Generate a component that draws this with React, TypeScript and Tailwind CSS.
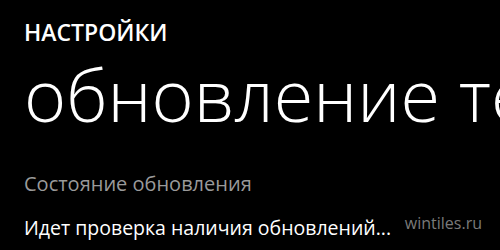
export default function App() {
  return (
    <div
      className="w-[500px] h-[250px] bg-black text-white overflow-hidden relative"
      style={{ fontFamily: '"Open Sans", "Noto Sans", sans-serif' }}
    >
      <div className="pl-6 pt-[17px]">
        <h2 className="text-[23px] leading-[30px] font-semibold">НАСТРОЙКИ</h2>
        <h1 className="mt-[7px] text-[72px] leading-[80px] font-light whitespace-nowrap overflow-hidden">
          обновление телефона
        </h1>
        <p className="mt-[37px] text-[20px] leading-[26px] text-[#9a9a9a]">Состояние обновления</p>
        <p className="mt-[18px] text-[19.5px] leading-[26px] text-white whitespace-nowrap">
          Идет проверка наличия обновлений...
        </p>
      </div>
      <span className="absolute right-[18px] bottom-[17px] text-[16px] leading-5 text-[#7a7a7a]">
        wintiles.ru
      </span>
    </div>
  )
}
